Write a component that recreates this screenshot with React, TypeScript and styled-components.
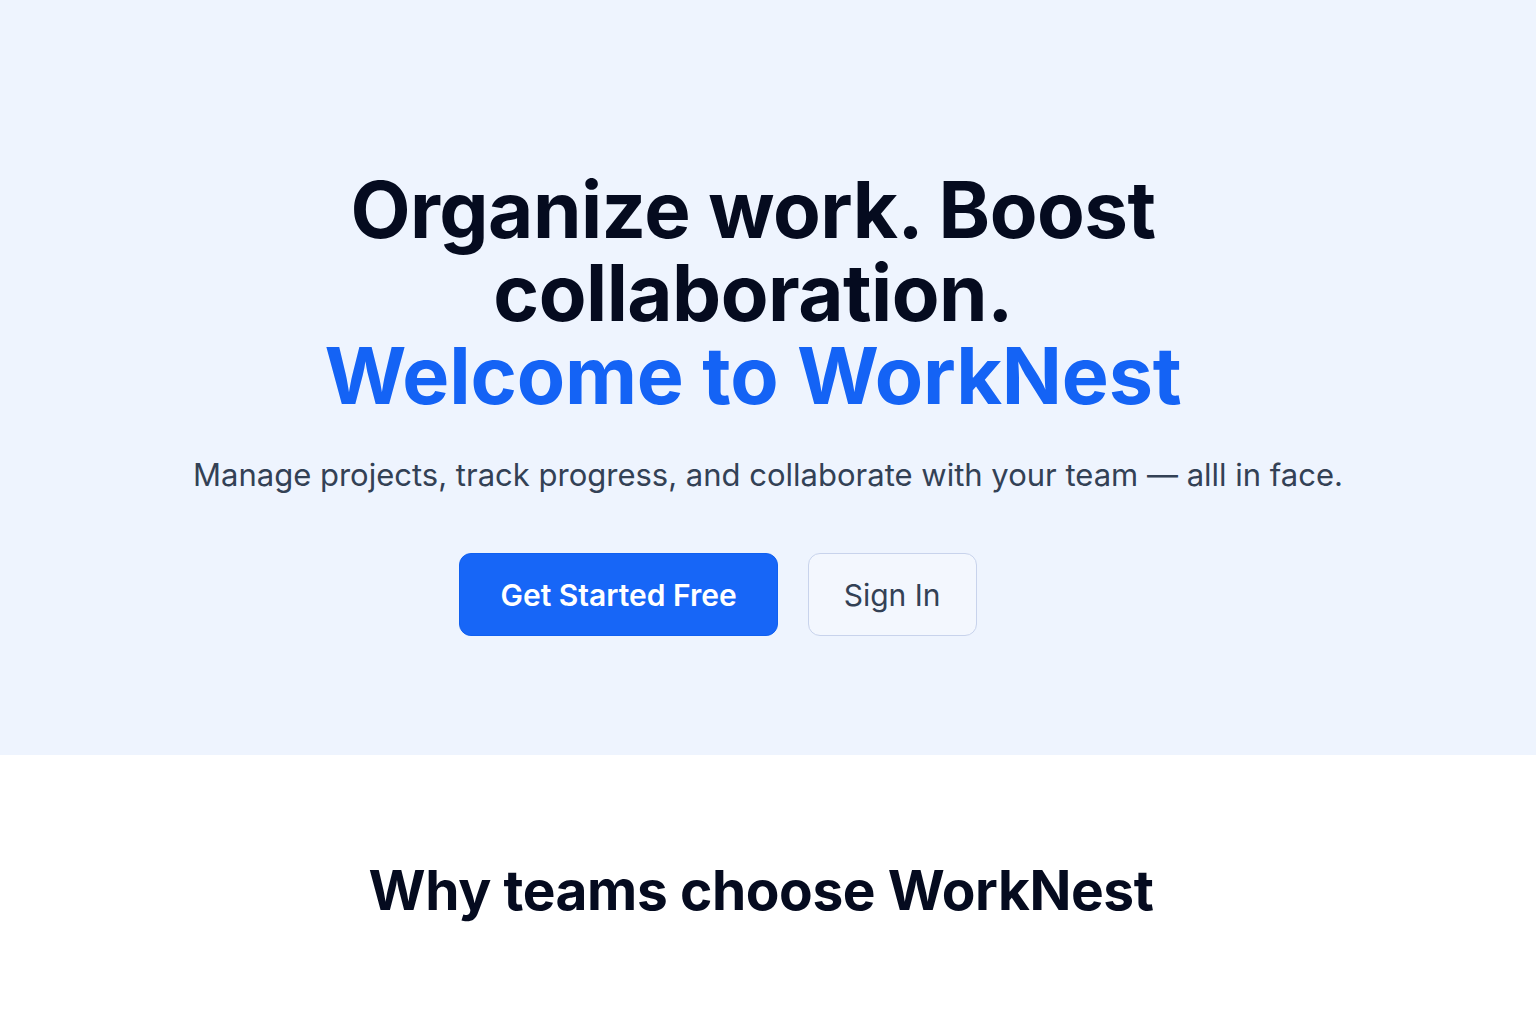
import React from "react";
import styled, { createGlobalStyle } from "styled-components";

const Global = createGlobalStyle`
  html, body { margin: 0; padding: 0; background: #ffffff; }
  body { font-family: Inter, "Noto Sans", "Liberation Sans", sans-serif; -webkit-font-smoothing: antialiased; }
  * { box-sizing: border-box; }
`;

const Hero = styled.section`
  background: #eef4fe;
  height: 755px;
  display: flex;
  flex-direction: column;
  align-items: center;
  padding-top: 168px;
`;

const Title = styled.h1`
  margin: 0 30px 0 0;
  font-size: 78px;
  line-height: 83px;
  font-weight: 700;
  letter-spacing: -0.5px;
  color: #050b1f;
  text-align: center;
  max-width: 900px;
`;

const Accent = styled.span`
  display: block;
  color: #1463f5;
  font-size: 79px;
  letter-spacing: -0.2px;
`;

const Subtitle = styled.p`
  margin: 38px 0 0;
  font-size: 31px;
  line-height: 40px;
  color: #334155;
  text-align: center;
`;

const Actions = styled.div`
  display: flex;
  gap: 30px;
  margin-top: 58px;
  padding-right: 100px;
`;

const Button = styled.button<{ $primary?: boolean }>`
  height: 83px;
  padding: 0 ${(p) => (p.$primary ? "40px" : "35px")};
  border-radius: 12px;
  font-family: inherit;
  font-size: 30px;
  font-weight: ${(p) => (p.$primary ? 600 : 400)};
  color: ${(p) => (p.$primary ? "#ffffff" : "#334155")};
  background: ${(p) => (p.$primary ? "#1766f7" : "#f3f7fe")};
  border: 1.5px solid ${(p) => (p.$primary ? "#1060f0" : "#c8d3ec")};
  cursor: pointer;
`;

const Features = styled.section`
  background: #ffffff;
  display: flex;
  justify-content: center;
  padding-top: 102px;
  padding-right: 14px;
  height: 269px;
`;

const SectionTitle = styled.h2`
  margin: 0;
  font-size: 55px;
  line-height: 66px;
  font-weight: 700;
  letter-spacing: -0.4px;
  color: #050b1f;
`;

export default function App() {
  return (
    <>
      <Global />
      <Hero>
        <Title>
          Organize work. Boost collaboration.
          <Accent>Welcome to WorkNest</Accent>
        </Title>
        <Subtitle>
          Manage projects, track progress, and collaborate with your team — alll in face.
        </Subtitle>
        <Actions>
          <Button $primary>Get Started Free</Button>
          <Button>Sign In</Button>
        </Actions>
      </Hero>
      <Features>
        <SectionTitle>Why teams choose WorkNest</SectionTitle>
      </Features>
    </>
  );
}
